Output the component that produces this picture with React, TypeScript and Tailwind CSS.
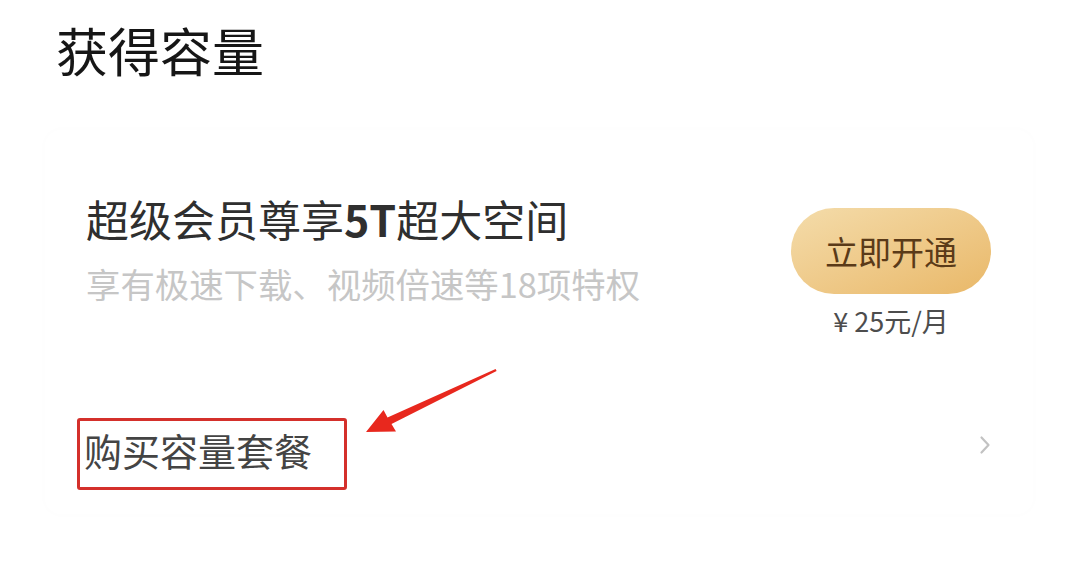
const font = "font-['Noto_Sans_CJK_SC','Noto_Sans',sans-serif]";

function Chevron() {
  return (
    <svg width="12" height="20" viewBox="0 0 12 20" className="mt-[17px] shrink-0">
      <path d="M2.5 2.5 L9.5 10 L2.5 17.5" fill="none" stroke="#c2c2c2" strokeWidth="2.2" strokeLinecap="round" strokeLinejoin="round" />
    </svg>
  );
}

// red annotation arrow drawn over the card
function Arrow() {
  return (
    <svg
      width="140"
      height="75"
      viewBox="0 0 140 75"
      className="absolute left-[360px] top-[365px] pointer-events-none"
    >
      <polygon
        points="135.6,4.1 136.6,5.9 31.5,59 36,66.5 6,67 23.5,45 27.5,52.5"
        fill="#e8281e"
      />
    </svg>
  );
}

export default function App() {
  return (
    <div className={`relative min-h-screen bg-white ${font}`}>
      {/* Header */}
      <h1 className="pl-[56px] pt-[24px] text-[52px] leading-none font-normal text-[#161616]">
        获得容量
      </h1>

      {/* Card */}
      <div className="mx-[45px] mt-[54px] rounded-2xl bg-white pl-[41px] pr-[42px] pb-[24px] pt-[67px] shadow-[0_0_10px_rgba(0,0,0,0.015)]">
        <div className="flex items-start justify-between">
          <div>
            <p className="text-[43px] leading-none text-[#2f2f2f]">
              超级会员尊享<span className="font-bold">5T</span>超大空间
            </p>
            <p className="mt-[26px] text-[34.4px] leading-none text-[#c6c6c6]">
              享有极速下载、视频倍速等18项特权
            </p>
          </div>
          <div className="mt-[11px] flex flex-col items-center">
            <button className="flex h-[86px] w-[200px] items-center justify-center rounded-full bg-gradient-to-br from-[#f4dcaa] to-[#e9b868] text-[33px] leading-none text-[#5a3a18]">
              立即开通
            </button>
            <p className="mt-[13px] text-[27px] leading-none text-[#4d4d4d]">¥ 25元/月</p>
          </div>
        </div>

        <div className="mt-[84px] flex items-start justify-between">
          <span className="-ml-[9px] rounded-[3px] border-[3px] border-[#d4302b] pb-[18px] pl-[4px] pr-[32px] pt-[10px] text-[38px] leading-none text-[#444]">
            购买容量套餐
          </span>
          <Chevron />
        </div>
      </div>

      <Arrow />
    </div>
  );
}
